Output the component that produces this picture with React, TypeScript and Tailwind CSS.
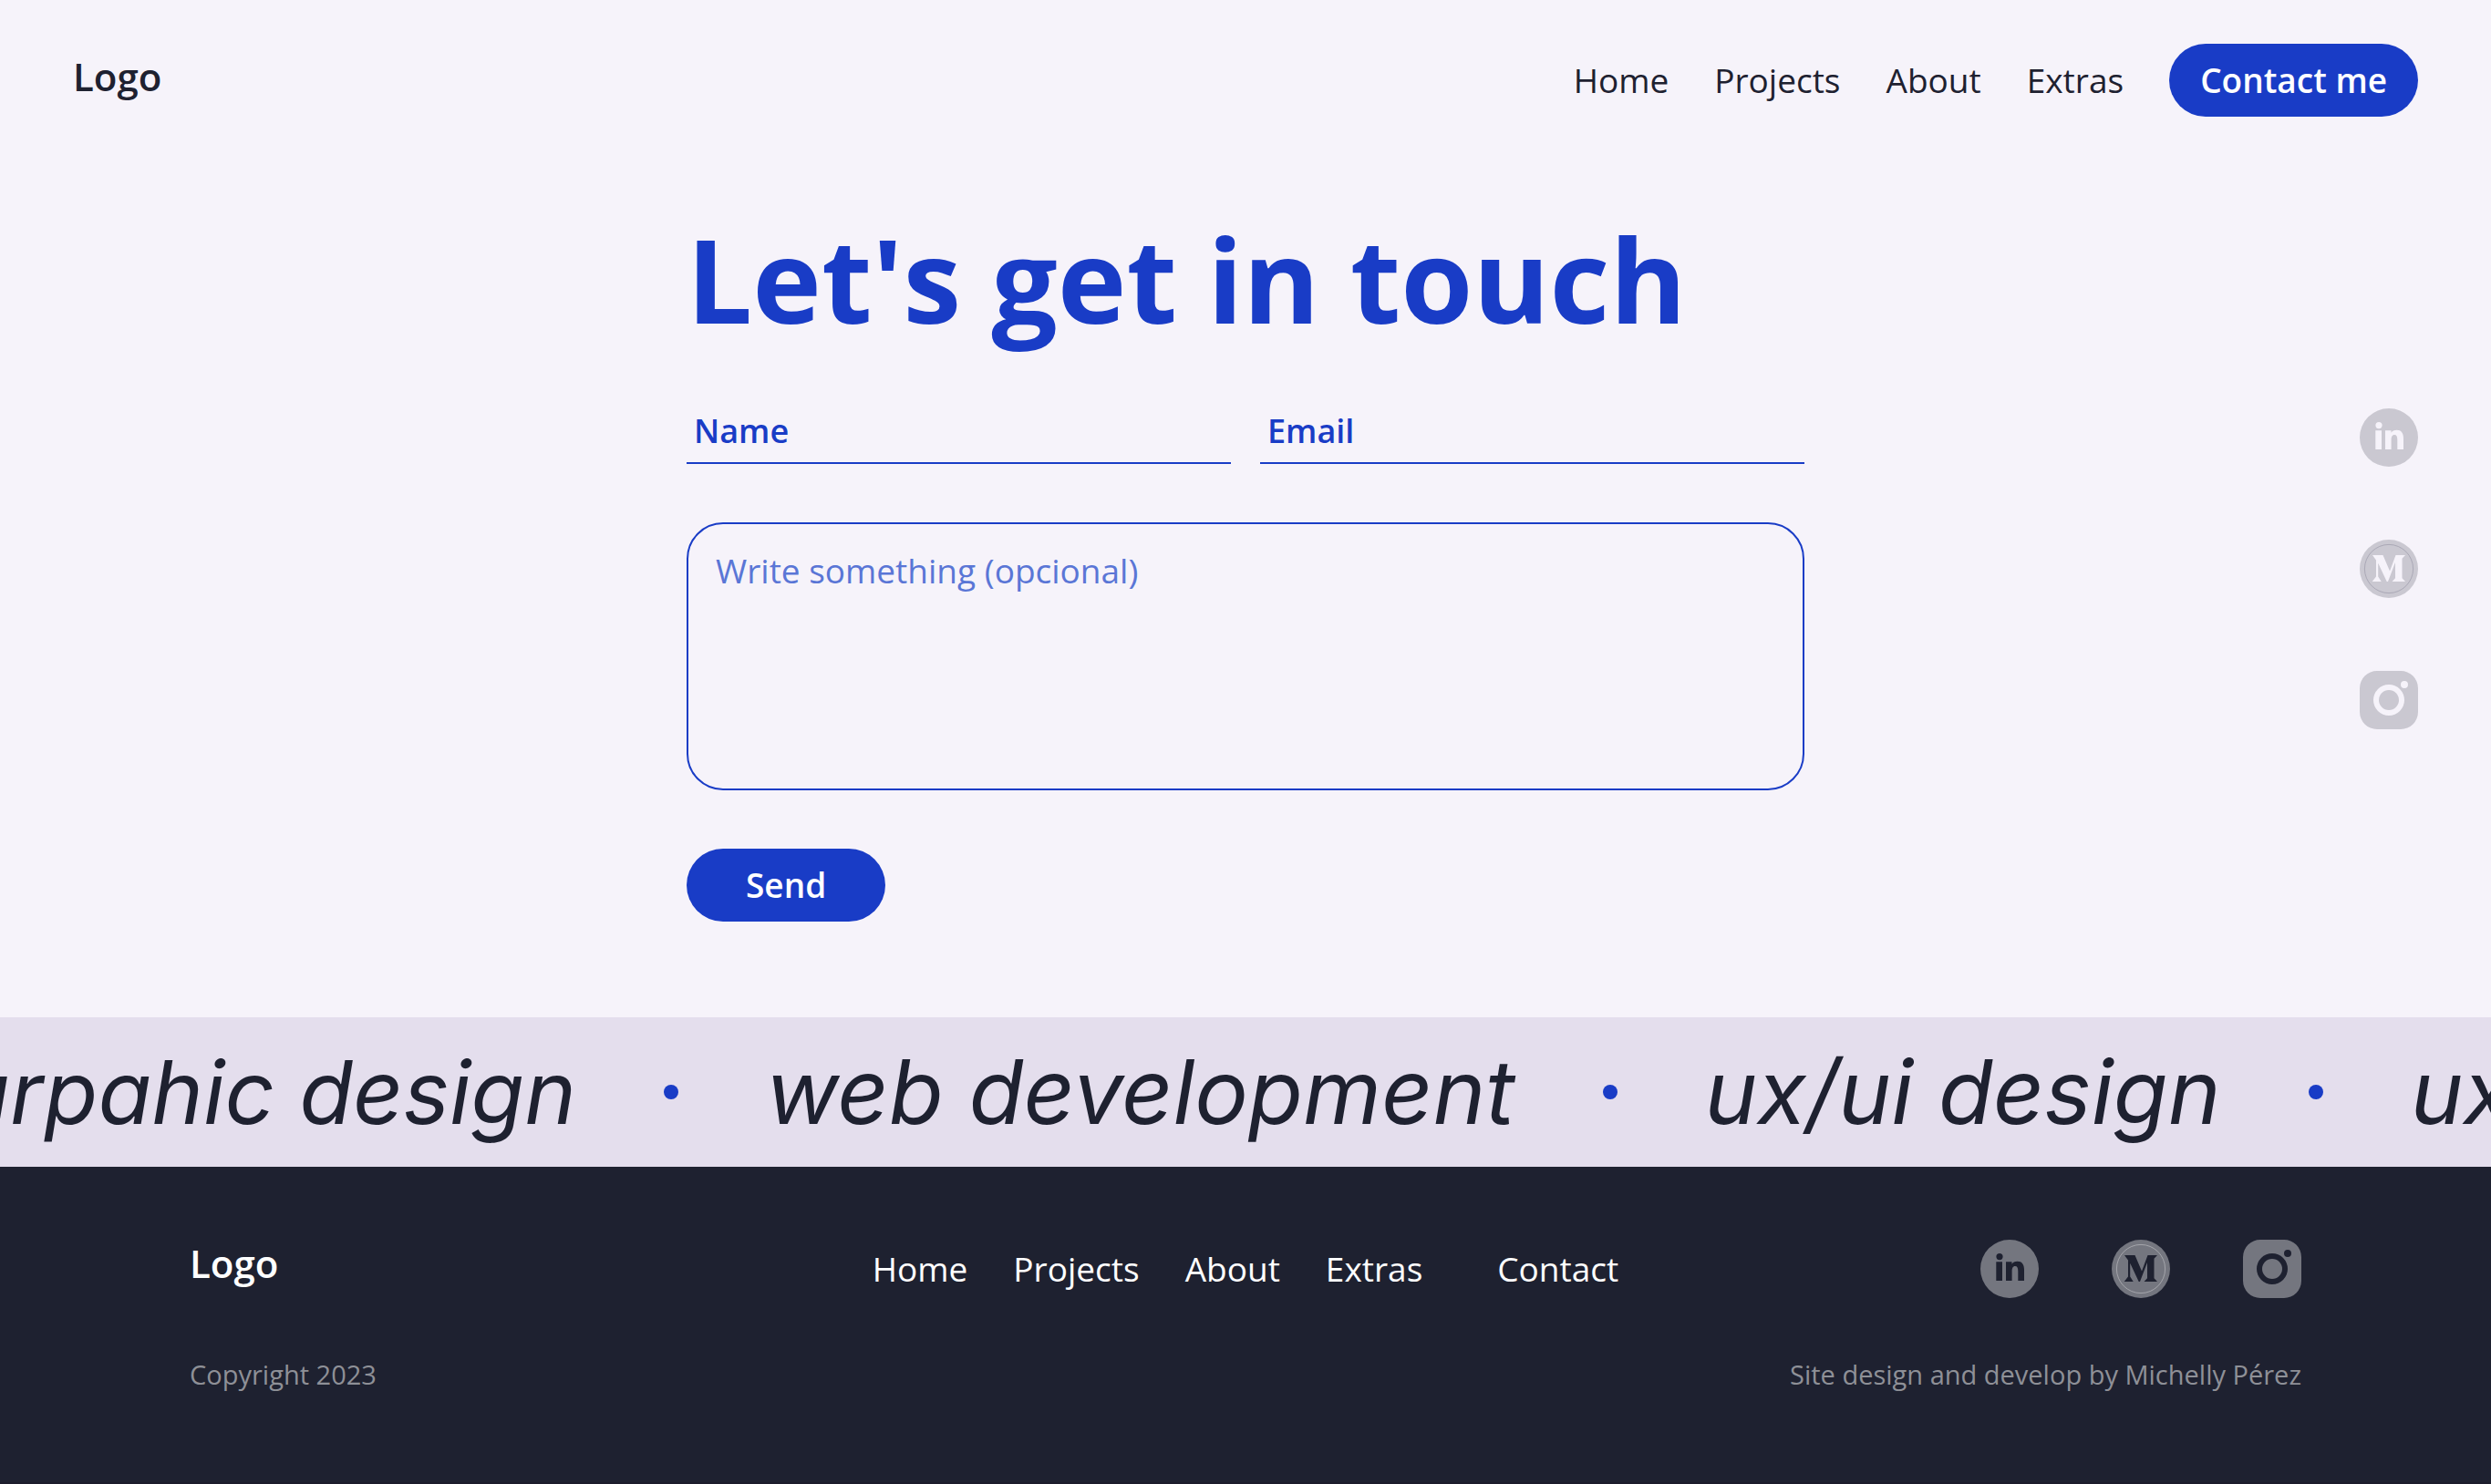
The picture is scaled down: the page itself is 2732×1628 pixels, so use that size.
import { ReactNode } from "react";

const navLinks = ["Home", "Projects", "About", "Extras"];

function LinkedInIcon() {
  return (
    <svg viewBox="0 0 64 64" className="size-16" fill="currentColor" aria-hidden="true">
      <path
        fillRule="evenodd"
        d="M32 0a32 32 0 1 1 0 64a32 32 0 1 1 0-64ZM21 15a3.6 3.6 0 1 0 0 7.2a3.6 3.6 0 1 0 0-7.2ZM17.3 24.3V45H24V24.3ZM28 24.3V45H34.6V34.7C34.6 31.3 35.6 29 38 29C40.500 29 41.300 31 41.300 34.500V45H48V33C48 27 45.500 23.700 40.700 23.700C37.600 23.700 35.500 25 34.500 26.700V24.300Z"
      />
    </svg>
  );
}

function MediumIcon({ ring }: { ring: string }) {
  return (
    <svg viewBox="0 0 64 64" className="size-16" fill="currentColor" aria-hidden="true">
      <path
        fillRule="evenodd"
        d="M32 0a32 32 0 1 1 0 64a32 32 0 1 1 0-64ZM14 17H25.500L33 34.500L39.500 17H50L46.500 20.800V42.300L50 46H35.500L39 42.300V25L31 46H29.700L20.200 25.700V40.500L23.700 46H13.700L18 40.500V22.500Z"
      />
      <circle cx="32" cy="32" r="26.600" fill="none" strokeWidth="1" className={ring} />
    </svg>
  );
}

function InstagramIcon() {
  return (
    <svg viewBox="0 0 64 64" className="size-16" fill="currentColor" aria-hidden="true">
      <path
        fillRule="evenodd"
        d="M19 0H45A19 19 0 0 1 64 19V45A19 19 0 0 1 45 64H19A19 19 0 0 1 0 45V19A19 19 0 0 1 19 0ZM32 15a17 17 0 1 0 0 34a17 17 0 1 0 0-34ZM49 11a4 4 0 1 0 0 8a4 4 0 1 0 0-8Z"
      />
      <circle cx="32" cy="32" r="11" />
    </svg>
  );
}

function SocialLinks({ ring }: { ring: string }) {
  return (
    <>
      <a href="#linkedin" aria-label="LinkedIn"><LinkedInIcon /></a>
      <a href="#medium" aria-label="Medium"><MediumIcon ring={ring} /></a>
      <a href="#instagram" aria-label="Instagram"><InstagramIcon /></a>
    </>
  );
}

function Dot() {
  return <span className="size-4 shrink-0 rounded-full bg-[#193cc6]" />;
}

function Phrase({ children }: { children: ReactNode }) {
  return <span className="shrink-0">{children}</span>;
}

export default function App() {
  return (
    <div className="flex min-h-screen flex-col bg-[#1c1c2b] font-['Open_Sans',sans-serif] text-[37px] leading-[48px] text-[#1e2130]">
      <div className="bg-[#f6f3fa]">
        <header className="flex items-center justify-between px-20 pt-12">
          <a href="#top" className="pb-2 text-[42px] font-semibold">Logo</a>
          <nav className="flex items-center gap-[50px]">
            {navLinks.map((label) => (
              <a key={label} href={`#${label.toLowerCase()}`}>{label}</a>
            ))}
            <a href="#contact" className="flex h-20 items-center rounded-full bg-[#193cc6] px-[34px] font-semibold text-white">
              Contact me
            </a>
          </nav>
        </header>

        <main className="relative px-20 pt-[106px] pb-[105px]">
          <div className="mx-auto max-w-[1226px] text-[#193cc6]">
            <h1 className="text-[128px] leading-[144px] font-bold whitespace-nowrap">Let&apos;s get in touch</h1>
            <form className="mt-[71px] flex flex-col gap-16" onSubmit={(e) => e.preventDefault()}>
              <div className="grid grid-cols-2 gap-8">
                <input type="text" aria-label="Name" placeholder="Name" className="w-full border-b-2 border-[#193cc6] bg-transparent px-2 pb-[10px] text-[36px] leading-[48px] font-semibold outline-none placeholder:text-[#193cc6]" />
                <input type="email" aria-label="Email" placeholder="Email" className="w-full border-b-2 border-[#193cc6] bg-transparent px-2 pb-[10px] text-[36px] leading-[48px] font-semibold outline-none placeholder:text-[#193cc6]" />
              </div>
              <textarea aria-label="Message" placeholder="Write something (opcional)" className="block h-[294px] w-full resize-none rounded-[40px] border-2 border-[#193cc6] bg-transparent px-[30px] py-[27px] outline-none placeholder:text-[#5a76d6]" />
              <button type="submit" className="h-20 self-start rounded-full bg-[#193cc6] px-[65px] font-semibold text-white">Send</button>
            </form>
          </div>
          <aside className="absolute top-80 right-20 flex flex-col gap-20 text-[#cac8d1]">
            <SocialLinks ring="stroke-[#aaa8b6]" />
          </aside>
        </main>
      </div>

      <section className="flex h-[164px] items-center gap-24 overflow-hidden bg-[#e4deed] font-['Inter',sans-serif] text-[98px] leading-[120px] whitespace-nowrap italic">
        <div className="-ml-12 shrink-0 text-[96px]">grpahic design</div>
        <Dot />
        <Phrase>web development</Phrase>
        <Dot />
        <Phrase>ux/ui design</Phrase>
        <Dot />
        <Phrase>ux/ui design</Phrase>
      </section>

      <footer className="bg-[#1e2130] px-52 pt-20 pb-[98px] text-white">
        <div className="grid grid-cols-[1fr_auto_1fr] items-center">
          <a href="#top" className="pb-3 text-[42px] font-semibold">Logo</a>
          <nav className="flex gap-[50px]">
            {navLinks.map((label) => (
              <a key={label} href={`#${label.toLowerCase()}`}>{label}</a>
            ))}
            <a href="#contact" className="pl-8">Contact</a>
          </nav>
          <div className="flex justify-end gap-20 text-[#74767f]">
            <SocialLinks ring="stroke-[#a5a6ac]" />
          </div>
        </div>
        <div className="mt-16 flex justify-between text-[29px] leading-10 text-[#8e9097]">
          <p>Copyright 2023</p>
          <p>Site design and develop by Michelly Pérez</p>
        </div>
      </footer>
    </div>
  );
}
